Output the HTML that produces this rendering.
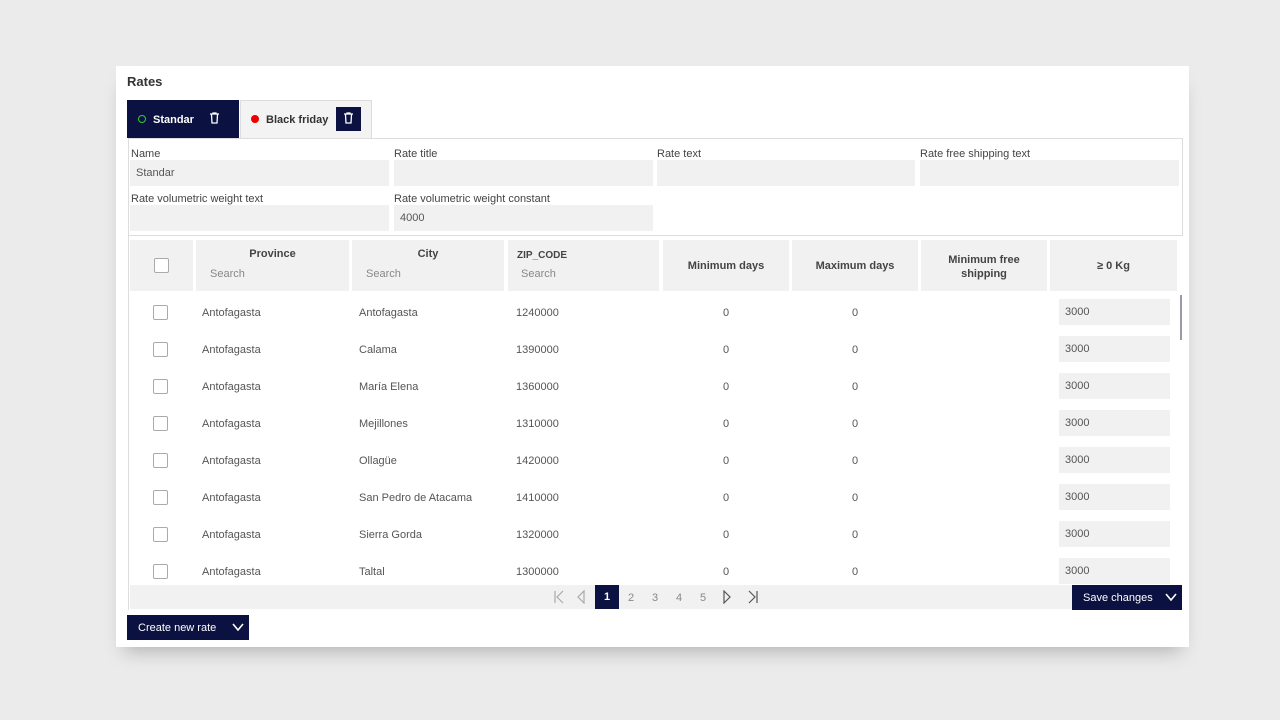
<!DOCTYPE html>
<html><head><meta charset="utf-8"><style>
*{box-sizing:border-box;margin:0;padding:0}
body{width:1280px;height:720px;background:#ebebeb;font-family:"Liberation Sans",sans-serif;position:relative;overflow:hidden;color:#444}
.a{position:absolute}
.card{left:116px;top:66px;width:1073px;height:581px;background:#fff;box-shadow:0 12px 18px -8px rgba(0,0,0,.25)}
.lbl{font-size:11px;color:#444}
.in{background:#f1f1f1;font-size:11px;color:#555;padding-left:6px;line-height:27px;height:26px}
.hd{background:#f1f1f1;font-size:11px;font-weight:bold;color:#444;text-align:center}
.sr{font-weight:normal;color:#888;text-align:left;padding-left:14px}
.cb{width:15px;height:15px;border:1px solid #aaa;border-radius:2px;background:#fff}
.c{font-size:11px;color:#555}
.nav{background:#0b1140;color:#fff}
.pg{font-size:11px;color:#888;top:592px}
</style></head><body>
<div class="a card"></div>
<div class="a" style="left:127px;top:74px;font-size:13px;font-weight:bold;color:#333">Rates</div>
<div class="a nav" style="left:127px;top:100px;width:112px;height:38px"></div>
<div class="a" style="left:138px;top:115px;width:8px;height:8px;border:1.5px solid #3c3;border-radius:50%"></div>
<div class="a" style="left:153px;top:114px;font-size:11px;font-weight:bold;color:#fff">Standar</div>
<svg class="a" style="left:209px;top:112px" width="11" height="12" viewBox="0 0 11 12"><path d="M1 2h9M4 2V1h3v1M2.5 2.5l.5 8.5h5l.5-8.5" fill="none" stroke="#fff" stroke-width="1.3"/></svg>
<div class="a" style="left:240px;top:100px;width:132px;height:38px;background:#f3f3f3;border:1px solid #ddd;border-bottom:none"></div>
<div class="a" style="left:251px;top:115px;width:8px;height:8px;background:#e00;border-radius:50%"></div>
<div class="a" style="left:266px;top:114px;font-size:11px;font-weight:bold;color:#333">Black friday</div>
<div class="a nav" style="left:336px;top:107px;width:25px;height:24px"></div>
<svg class="a" style="left:343px;top:112px" width="11" height="12" viewBox="0 0 11 12"><path d="M1 2h9M4 2V1h3v1M2.5 2.5l.5 8.5h5l.5-8.5" fill="none" stroke="#fff" stroke-width="1.3"/></svg>
<div class="a" style="left:128px;top:138px;width:1055px;height:98px;border:1px solid #ddd"></div>
<div class="a lbl" style="left:131px;top:148px">Name</div>
<div class="a lbl" style="left:394px;top:148px">Rate title</div>
<div class="a lbl" style="left:657px;top:148px">Rate text</div>
<div class="a lbl" style="left:920px;top:148px">Rate free shipping text</div>
<div class="a in" style="left:130px;top:160px;width:259px">Standar</div>
<div class="a in" style="left:394px;top:160px;width:259px"></div>
<div class="a in" style="left:657px;top:160px;width:258px"></div>
<div class="a in" style="left:920px;top:160px;width:259px"></div>
<div class="a lbl" style="left:131px;top:193px">Rate volumetric weight text</div>
<div class="a lbl" style="left:394px;top:193px">Rate volumetric weight constant</div>
<div class="a in" style="left:130px;top:205px;width:259px"></div>
<div class="a in" style="left:394px;top:205px;width:259px">4000</div>
<div class="a" style="left:128px;top:236px;width:1px;height:374px;background:#ddd"></div>
<div class="a hd" style="left:130px;top:240px;width:63px;height:51px"></div>
<div class="a cb" style="left:154px;top:258px"></div>
<div class="a hd" style="left:196px;top:240px;width:153px;height:51px;padding-top:8px">Province<div class="sr" style="margin-top:8px">Search</div></div>
<div class="a hd" style="left:352px;top:240px;width:152px;height:51px;padding-top:8px">City<div class="sr" style="margin-top:8px">Search</div></div>
<div class="a hd" style="left:508px;top:240px;width:151px;height:51px;padding-top:10px;text-align:left;padding-left:9px;font-size:10px">ZIP_CODE<div class="sr" style="margin-top:7px;padding-left:4px;font-size:11px">Search</div></div>
<div class="a hd" style="left:663px;top:240px;width:126px;height:51px;line-height:53px">Minimum days</div>
<div class="a hd" style="left:792px;top:240px;width:126px;height:51px;line-height:53px">Maximum days</div>
<div class="a hd" style="left:921px;top:240px;width:126px;height:51px;padding-top:13px;line-height:14px">Minimum free<br>shipping</div>
<div class="a hd" style="left:1050px;top:240px;width:127px;height:51px;line-height:53px">≥ 0 Kg</div>
<div class="a" style="left:1180px;top:295px;width:2px;height:45px;background:#99a"></div>
<div id="rows"></div>
<script>
var d=[["Antofagasta","1240000"],["Calama","1390000"],["María Elena","1360000"],["Mejillones","1310000"],["Ollagüe","1420000"],["San Pedro de Atacama","1410000"],["Sierra Gorda","1320000"],["Taltal","1300000"]];
var h="";d.forEach(function(r,i){var y=312+37*i;
h+='<div class="a cb" style="left:153px;top:'+(y-7)+'px"></div>'+
'<div class="a c" style="left:202px;top:'+(y-5)+'px">Antofagasta</div>'+
'<div class="a c" style="left:359px;top:'+(y-5)+'px">'+r[0]+'</div>'+
'<div class="a c" style="left:516px;top:'+(y-5)+'px">'+r[1]+'</div>'+
'<div class="a c" style="left:723px;top:'+(y-5)+'px">0</div>'+
'<div class="a c" style="left:852px;top:'+(y-5)+'px">0</div>'+
'<div class="a in" style="left:1059px;top:'+(y-13)+'px;width:111px">3000</div>';});
document.getElementById("rows").innerHTML=h;
</script>
<div class="a" style="left:130px;top:585px;width:1050px;height:24px;background:#f1f1f1"></div>
<svg class="a" style="left:552px;top:590px" width="14" height="14"><path d="M3 1v12M11 1L5 7l6 6" fill="none" stroke="#aaa" stroke-width="1.2"/></svg>
<svg class="a" style="left:576px;top:590px" width="10" height="14"><path d="M8 1L2 7l6 6z" fill="none" stroke="#aaa" stroke-width="1.2"/></svg>
<div class="a nav" style="left:595px;top:585px;width:24px;height:24px;font-size:11px;font-weight:bold;text-align:center;line-height:25px">1</div>
<div class="a pg" style="left:628px">2</div>
<div class="a pg" style="left:652px">3</div>
<div class="a pg" style="left:676px">4</div>
<div class="a pg" style="left:700px">5</div>
<svg class="a" style="left:722px;top:590px" width="10" height="14"><path d="M2 1l6 6-6 6z" fill="none" stroke="#555" stroke-width="1.2"/></svg>
<svg class="a" style="left:746px;top:590px" width="14" height="14"><path d="M3 1l6 6-6 6M11 1v12" fill="none" stroke="#555" stroke-width="1.2"/></svg>
<div class="a nav" style="left:1072px;top:585px;width:110px;height:25px;font-size:11px;line-height:27px;padding-left:11px">Save changes</div>
<svg class="a" style="left:1165px;top:592px" width="12" height="10"><path d="M1 2l5 6 5-6" fill="none" stroke="#fff" stroke-width="1.6"/></svg>
<div class="a nav" style="left:127px;top:615px;width:122px;height:25px;font-size:11px;line-height:27px;padding-left:11px">Create new rate</div>
<svg class="a" style="left:232px;top:622px" width="12" height="10"><path d="M1 2l5 6 5-6" fill="none" stroke="#fff" stroke-width="1.6"/></svg>
</body></html>
